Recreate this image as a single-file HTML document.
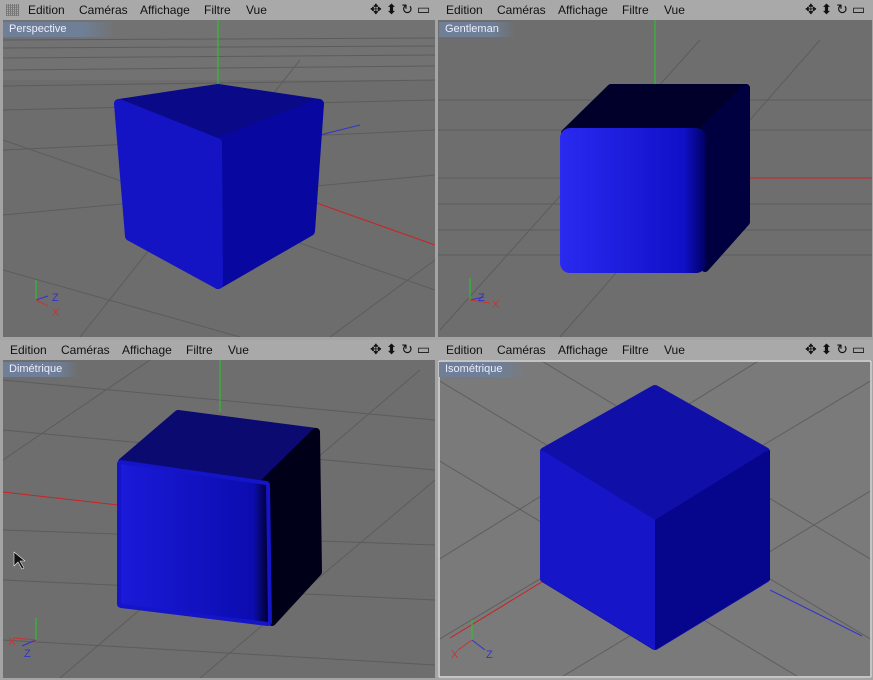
<!DOCTYPE html>
<html><head><meta charset="utf-8"><style>
html,body{margin:0;padding:0;width:873px;height:680px;overflow:hidden;background:#a4a4a4;font-family:"Liberation Sans",sans-serif}
.bar{position:absolute;height:20px;background:#a9a9a9;font-size:12px;color:#111}
.bar span{position:absolute;top:3px}
.lab{position:absolute;height:15px;font-size:11px;color:#eef;line-height:15px;padding-left:6px;background:linear-gradient(90deg,#6f7f98 70%,rgba(111,127,152,0))}
</style></head><body>
<div class="bar" style="left:0;top:0;width:873px">
<span style="left:6px;top:4px;width:13px;height:12px;background:repeating-linear-gradient(90deg,#777 0 1px,transparent 1px 2px),repeating-linear-gradient(0deg,#888 0 1px,transparent 1px 2px)"></span>
<span style="left:28px">Edition</span><span style="left:79px">Caméras</span><span style="left:140px">Affichage</span><span style="left:204px">Filtre</span><span style="left:246px">Vue</span>
<span style="left:370px;top:1px;font-size:14px">✥ ⬍ ↻ ▭</span>
<span style="left:446px">Edition</span><span style="left:497px">Caméras</span><span style="left:558px">Affichage</span><span style="left:622px">Filtre</span><span style="left:664px">Vue</span>
<span style="left:805px;top:1px;font-size:14px">✥ ⬍ ↻ ▭</span>
</div>
<div class="bar" style="left:0;top:340px;width:873px">
<span style="left:10px">Edition</span><span style="left:61px">Caméras</span><span style="left:122px">Affichage</span><span style="left:186px">Filtre</span><span style="left:228px">Vue</span>
<span style="left:370px;top:1px;font-size:14px">✥ ⬍ ↻ ▭</span>
<span style="left:446px">Edition</span><span style="left:497px">Caméras</span><span style="left:558px">Affichage</span><span style="left:622px">Filtre</span><span style="left:664px">Vue</span>
<span style="left:805px;top:1px;font-size:14px">✥ ⬍ ↻ ▭</span>
</div>
<svg width="873" height="680" style="position:absolute;left:0;top:0;pointer-events:none" stroke-linejoin="round">
<defs>
<linearGradient id="gf" x1="0" x2="1"><stop offset="0" stop-color="#2a2af0"/><stop offset="0.85" stop-color="#1010c8"/><stop offset="1" stop-color="#000060"/></linearGradient>
<linearGradient id="bf" x1="0" x2="1"><stop offset="0" stop-color="#1a1ad8"/><stop offset="0.9" stop-color="#0c0cb0"/><stop offset="1" stop-color="#000030"/></linearGradient>
<clipPath id="c1"><rect x="3" y="20" width="432" height="317"/></clipPath>
<clipPath id="c2"><rect x="438" y="20" width="434" height="317"/></clipPath>
<clipPath id="c3"><rect x="3" y="360" width="432" height="318"/></clipPath>
<clipPath id="c4"><rect x="438" y="360" width="434" height="318"/></clipPath>
</defs>
<g clip-path="url(#c1)">
<rect x="3" y="20" width="432" height="317" fill="#6d6d6d"/>
<rect x="3" y="20" width="432" height="60" fill="#727272"/>
<g stroke="#5c5c5c" stroke-width="1">
<line x1="3" y1="40" x2="435" y2="38"/><line x1="3" y1="48" x2="435" y2="46"/><line x1="3" y1="58" x2="435" y2="55"/><line x1="3" y1="70" x2="435" y2="66"/><line x1="3" y1="86" x2="435" y2="80"/><line x1="3" y1="110" x2="435" y2="100"/><line x1="3" y1="150" x2="435" y2="130"/><line x1="3" y1="215" x2="435" y2="175"/>
<line x1="3" y1="140" x2="435" y2="290"/><line x1="80" y1="337" x2="300" y2="60"/><line x1="3" y1="270" x2="240" y2="337"/><line x1="330" y1="337" x2="435" y2="260"/>
</g>
<line x1="218" y1="20" x2="218" y2="90" stroke="#2c2" />
<line x1="280" y1="190" x2="435" y2="245" stroke="#c22"/>
<line x1="320" y1="135" x2="360" y2="125" stroke="#33c"/>
<polygon points="119,104 218,89 319,104 217,143" fill="#0a0a88" stroke="#0a0a88" stroke-width="10"/>
<polygon points="217,143 319,104 310,231 218,284" fill="#0808a0" stroke="#0808a0" stroke-width="10"/>
<polygon points="119,104 217,143 218,284 130,236" fill="#1414c4" stroke="#1414c4" stroke-width="10"/>
<line x1="36" y1="300" x2="36" y2="280" stroke="#2c2"/><line x1="36" y1="300" x2="48" y2="296" stroke="#33c"/><line x1="36" y1="300" x2="48" y2="306" stroke="#c33"/>
<text x="52" y="301" font-size="11" fill="#33c">Z</text><text x="52" y="316" font-size="11" fill="#c33">X</text>
</g>
<g clip-path="url(#c2)">
<rect x="438" y="20" width="434" height="317" fill="#6e6e6e"/>
<g stroke="#5c5c5c"><line x1="438" y1="100" x2="872" y2="100"/><line x1="438" y1="130" x2="872" y2="130"/><line x1="438" y1="178" x2="872" y2="178"/><line x1="438" y1="204" x2="872" y2="204"/><line x1="438" y1="230" x2="872" y2="230"/><line x1="438" y1="255" x2="872" y2="255"/><line x1="440" y1="330" x2="700" y2="40"/><line x1="560" y1="337" x2="820" y2="40"/></g>
<line x1="655" y1="20" x2="655" y2="85" stroke="#2c2"/><line x1="730" y1="178" x2="872" y2="178" stroke="#c22"/>
<polygon points="565,133 611,88 746,88 705,128" fill="#00002a" stroke="#00002a" stroke-width="8"/>
<polygon points="705,128 746,88 746,222 705,268" fill="#000040" stroke="#000040" stroke-width="8"/>
<rect x="560" y="128" width="146" height="145" rx="10" fill="url(#gf)"/>
<line x1="470" y1="300" x2="470" y2="278" stroke="#2c2"/><line x1="470" y1="300" x2="484" y2="297" stroke="#33c"/><line x1="470" y1="300" x2="490" y2="303" stroke="#c33"/>
<text x="478" y="301" font-size="11" fill="#33c">Z</text><text x="492" y="308" font-size="11" fill="#c33">X</text>
</g>
<g clip-path="url(#c3)">
<rect x="3" y="360" width="432" height="318" fill="#6e6e6e"/>
<g stroke="#5c5c5c"><line x1="3" y1="380" x2="435" y2="420"/><line x1="3" y1="430" x2="435" y2="470"/><line x1="3" y1="530" x2="435" y2="545"/><line x1="3" y1="580" x2="435" y2="600"/><line x1="3" y1="640" x2="435" y2="665"/><line x1="60" y1="678" x2="420" y2="370"/><line x1="3" y1="460" x2="150" y2="360"/><line x1="200" y1="678" x2="435" y2="480"/></g>
<line x1="220" y1="360" x2="220" y2="412" stroke="#2c2"/><line x1="3" y1="492" x2="118" y2="505" stroke="#c22"/>
<polygon points="122,462 178,414 316,432 265,482" fill="#0a0a70" stroke="#0a0a70" stroke-width="8"/>
<polygon points="265,482 316,432 318,572 272,622" fill="#000018" stroke="#000018" stroke-width="8"/>
<polygon points="121,464 266,485 268,622 121,604" fill="url(#bf)" stroke="#1414c8" stroke-width="8"/>
<polygon points="121,464 266,485 268,622 121,604" fill="url(#bf)"/>
<line x1="36" y1="640" x2="36" y2="618" stroke="#2c2"/><line x1="36" y1="640" x2="22" y2="646" stroke="#33c"/><line x1="36" y1="640" x2="14" y2="638" stroke="#c33"/>
<text x="8" y="645" font-size="11" fill="#c33">X</text><text x="24" y="657" font-size="11" fill="#33c">Z</text>
<polygon points="14,552 14,566 18,562 22,569 24,568 20,561 25,561" fill="#111" stroke="#eee" stroke-width="0.6"/>
</g>
<g clip-path="url(#c4)">
<rect x="438" y="360" width="434" height="318" fill="#7a7a7a"/>
<g stroke="#5e5e5e"><line x1="438" y1="380" x2="872" y2="640"/><line x1="438" y1="640" x2="872" y2="380"/><line x1="438" y1="560" x2="760" y2="360"/><line x1="560" y1="678" x2="872" y2="490"/><line x1="540" y1="360" x2="872" y2="560"/><line x1="438" y1="460" x2="800" y2="678"/></g>
<line x1="450" y1="638" x2="545" y2="580" stroke="#c22"/><line x1="770" y1="590" x2="862" y2="636" stroke="#33c"/>
<polygon points="655,390 765,452 765,578 655,645 545,578 545,452" fill="#1010a8" stroke="#1010a8" stroke-width="10"/>
<polygon points="545,452 655,520 655,650 540,580 540,450" fill="#1616c8"/>
<polygon points="655,520 765,452 770,450 770,580 655,650" fill="#06068c"/>
<polygon points="540,450 655,520 655,650" fill="none"/>
<polygon points="545,452 655,520 655,645 545,578" fill="#1616c8" stroke="#1616c8" stroke-width="10" stroke-opacity="0"/>
<polygon points="655,520 765,452 765,578 655,645" fill="#06068c"/>
<line x1="472" y1="640" x2="472" y2="620" stroke="#2c2"/><line x1="472" y1="640" x2="485" y2="650" stroke="#33c"/><line x1="472" y1="640" x2="458" y2="650" stroke="#c33"/>
<text x="451" y="658" font-size="11" fill="#c33">X</text><text x="486" y="658" font-size="11" fill="#33c">Z</text>
<rect x="439" y="361" width="432" height="316" fill="none" stroke="#ddd" stroke-width="1.5"/>
</g>
</svg>
<div class="lab" style="left:3px;top:22px;width:106px">Perspective</div>
<div class="lab" style="left:439px;top:22px;width:70px">Gentleman</div>
<div class="lab" style="left:3px;top:362px;width:70px">Dimétrique</div>
<div class="lab" style="left:439px;top:362px;width:80px">Isométrique</div>
</body></html>
